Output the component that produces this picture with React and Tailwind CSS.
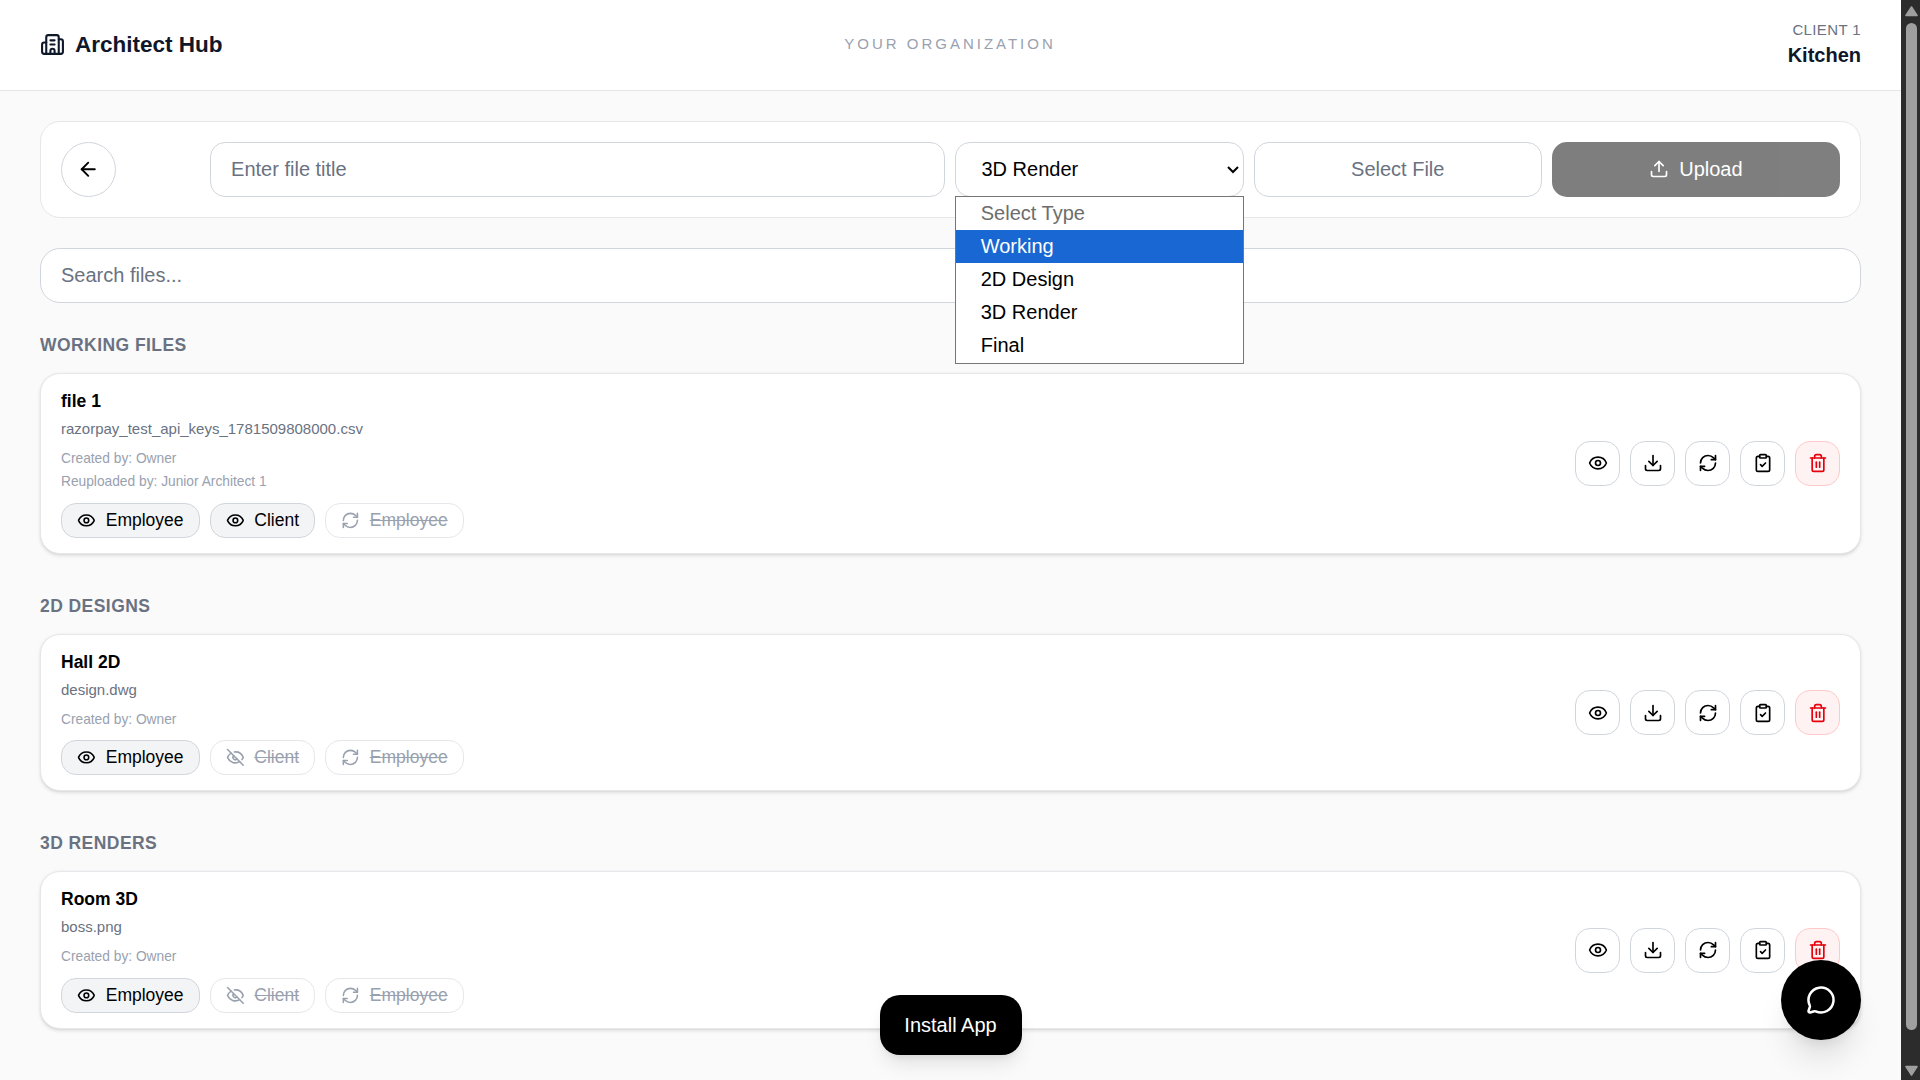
import React from "react";
import {
  ArrowLeft,
  Building2,
  ClipboardCheck,
  Download,
  Eye,
  EyeOff,
  MessageCircle,
  RefreshCw,
  Trash2,
  Upload,
} from "lucide-react";

const sections = [
  {
    heading: "WORKING FILES",
    title: "file 1",
    file: "razorpay_test_api_keys_1781509808000.csv",
    notes: ["Created by: Owner", "Reuploaded by: Junior Architect 1"],
    clientVisible: true,
  },
  {
    heading: "2D DESIGNS",
    title: "Hall 2D",
    file: "design.dwg",
    notes: ["Created by: Owner"],
    clientVisible: false,
  },
  {
    heading: "3D RENDERS",
    title: "Room 3D",
    file: "boss.png",
    notes: ["Created by: Owner"],
    clientVisible: false,
  },
];

const typeOptions = ["Select Type", "Working", "2D Design", "3D Render", "Final"];

function Chip({ icon: Icon, label, active }) {
  return (
    <button
      className={
        active
          ? "flex h-7 items-center gap-2 rounded-xl border border-gray-300 bg-gray-100 px-3 text-sm text-black"
          : "flex h-7 items-center gap-2 rounded-xl border border-gray-200 bg-white px-3 text-sm text-gray-400 line-through"
      }
    >
      <Icon size={15} />
      <span>{label}</span>
    </button>
  );
}

function ActionButton({ icon: Icon, danger }) {
  return (
    <button
      className={
        danger
          ? "flex size-9 items-center justify-center rounded-xl border border-red-200 bg-red-50 text-red-600"
          : "flex size-9 items-center justify-center rounded-xl border border-gray-300 bg-white text-black"
      }
    >
      <Icon size={16} />
    </button>
  );
}

function FileSection({ section }) {
  return (
    <section>
      <h2 className="mb-3 text-sm font-semibold tracking-wide text-gray-500">{section.heading}</h2>
      <div className="flex items-center justify-between rounded-2xl border border-gray-200 bg-white px-4 py-3 shadow-sm">
        <div>
          <h3 className="text-sm font-semibold text-black">{section.title}</h3>
          <p className="mt-1 text-xs text-gray-500">{section.file}</p>
          <div className="mt-2 space-y-0.5 text-[11px] leading-[16.5px] text-gray-400">
            {section.notes.map((note) => (
              <p key={note}>{note}</p>
            ))}
          </div>
          <div className="mt-2 flex gap-2">
            <Chip icon={Eye} label="Employee" active />
            <Chip
              icon={section.clientVisible ? Eye : EyeOff}
              label="Client"
              active={section.clientVisible}
            />
            <Chip icon={RefreshCw} label="Employee" />
          </div>
        </div>
        <div className="flex gap-2">
          <ActionButton icon={Eye} />
          <ActionButton icon={Download} />
          <ActionButton icon={RefreshCw} />
          <ActionButton icon={ClipboardCheck} />
          <ActionButton icon={Trash2} danger />
        </div>
      </div>
    </section>
  );
}

function TypeSelect() {
  return (
    <div className="relative col-span-2">
      <select
        defaultValue="3D Render"
        className="h-11 w-full rounded-xl border border-gray-300 bg-white px-4 pb-[1.6px] text-base text-black outline-none"
      >
        {typeOptions.map((option) => (
          <option key={option}>{option}</option>
        ))}
      </select>
      <ul className="absolute inset-x-0 top-[43.2px] z-10 border border-[#767676] bg-white pb-[0.8px] text-base">
        {typeOptions.map((option) => (
          <li
            key={option}
            className={
              option === "Working"
                ? "flex h-[26.4px] items-center bg-[#1967d2] pb-[1.6px] pl-[19.4px] text-white"
                : option === "Select Type"
                  ? "flex h-[26.4px] items-center pb-[1.6px] pl-[19.4px] text-[#6d6d6d]"
                  : "flex h-[26.4px] items-center pb-[1.6px] pl-[19.4px] text-black"
            }
          >
            {option}
          </li>
        ))}
      </ul>
    </div>
  );
}

function Scrollbar() {
  return (
    <div className="flex w-[19px] shrink-0 flex-col items-center bg-[#2c2c2c] pt-1.5 pb-1 pl-px">
      <svg width="13" height="11" viewBox="0 0 13 11" className="mb-1.5 shrink-0">
        <path d="M6.5 1 12 9.4H1Z" fill="#9f9f9f" stroke="#9f9f9f" strokeWidth="1.6" strokeLinejoin="round" />
      </svg>
      <div className="h-[1007px] w-[11px] rounded-full bg-[#9f9f9f]" />
      <svg width="13" height="11" viewBox="0 0 13 11" className="mt-auto shrink-0">
        <path d="M6.5 10 12 1.6H1Z" fill="#9f9f9f" stroke="#9f9f9f" strokeWidth="1.6" strokeLinejoin="round" />
      </svg>
    </div>
  );
}

export default function App() {
  return (
    <div className="flex h-[1080px] w-full overflow-hidden bg-[#fafafa] font-['Liberation_Sans',Arial,sans-serif]">
      <div className="relative min-w-0 flex-1">
        <div className="[zoom:1.25]">
          <header className="grid h-[72.8px] grid-cols-3 items-center border-b border-gray-200 bg-white px-8">
            <div className="flex items-center gap-2 pb-[1.6px] text-slate-900">
              <Building2 size={20} />
              <span className="text-lg font-semibold">Architect Hub</span>
            </div>
            <div className="pr-[0.8px] pb-[1.6px] text-center text-xs tracking-[0.2em] text-gray-400">
              YOUR ORGANIZATION
            </div>
            <div className="text-right">
              <p className="text-xs tracking-wide text-gray-500">CLIENT 1</p>
              <p className="text-base font-semibold text-slate-900">Kitchen</p>
            </div>
          </header>

          <main className="px-8 pt-6">
            <div className="mb-6 grid grid-cols-12 items-center gap-2 rounded-2xl border border-gray-200 bg-white p-4">
              <button className="flex size-11 items-center justify-center rounded-full border border-gray-300 bg-white text-black">
                <ArrowLeft size={18} />
              </button>
              <input
                placeholder="Enter file title"
                className="col-span-5 h-11 rounded-xl border border-gray-300 bg-white px-4 text-base placeholder:text-gray-500"
              />
              <TypeSelect />
              <button className="col-span-2 h-11 rounded-xl border border-gray-300 bg-white pb-[1.6px] text-base text-gray-500">
                Select File
              </button>
              <button className="col-span-2 flex h-11 items-center justify-center gap-2 rounded-xl bg-black pb-[1.6px] text-base text-white opacity-50">
                <Upload size={16} />
                Upload
              </button>
            </div>

            <input
              placeholder="Search files..."
              className="mb-6 block h-11 w-full rounded-2xl border border-gray-300 bg-white px-4 text-base placeholder:text-gray-500"
            />

            <div className="space-y-8">
              {sections.map((section) => (
                <FileSection key={section.heading} section={section} />
              ))}
            </div>
          </main>
        </div>

        <button className="absolute bottom-[25px] left-[880px] h-[60px] w-[142px] rounded-[20px] bg-black pr-px text-xl text-white shadow-[0_12px_19px_-4px_rgba(0,0,0,0.1),0_5px_8px_-5px_rgba(0,0,0,0.1)]">
          Install App
        </button>
        <button className="absolute right-10 bottom-10 flex size-20 items-center justify-center rounded-full bg-black text-white shadow-[0_25px_31px_-6px_rgba(0,0,0,0.1),0_10px_13px_-8px_rgba(0,0,0,0.1)]">
          <MessageCircle size={30} />
        </button>
      </div>
      <Scrollbar />
    </div>
  );
}
